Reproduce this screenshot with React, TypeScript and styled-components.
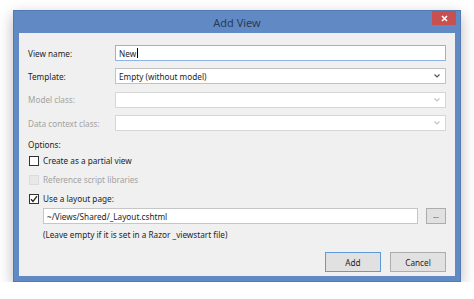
import React from "react";
import styled, { createGlobalStyle } from "styled-components";

const GlobalStyle = createGlobalStyle`
  html, body {
    margin: 0;
    padding: 0;
    background: #ffffff;
  }
  body {
    font-family: "Noto Sans", "Open Sans", sans-serif;
    font-size: 8.2px;
    color: #1e1e1e;
  }
`;

const Window = styled.div`
  margin: 10px 0 0 13px;
  width: 448px;
  box-sizing: border-box;
  background: #6189c4;
  border: 1px solid #5479b3;
  box-shadow: 0 5px 14px rgba(0, 0, 0, 0.28);
`;

const TitleBar = styled.div`
  position: relative;
  height: 22px;
  display: flex;
  align-items: center;
  justify-content: center;
`;

const Title = styled.div`
  font-size: 11px;
  color: #2a3b58;
  padding-top: 1px;
`;

const CloseButton = styled.div`
  position: absolute;
  top: 0;
  right: 4px;
  width: 24px;
  height: 14px;
  background: #c75050;
  color: #fff;
  display: flex;
  align-items: center;
  justify-content: center;
`;

const Body = styled.div`
  margin: 0 5px 5px 5px;
  background: #f0f0f0;
  padding: 12px 9px 4px 9px;
  display: flex;
  flex-direction: column;
`;

const FieldGrid = styled.div`
  display: grid;
  grid-template-columns: 87px 1fr;
  row-gap: 7.4px;
  align-items: center;
`;

const Label = styled.div<{ $disabled?: boolean }>`
  color: ${(p) => (p.$disabled ? "#a3a3a3" : "#1e1e1e")};
  white-space: nowrap;
`;

const TextBox = styled.div<{ $focused?: boolean }>`
  position: relative;
  height: 16px;
  box-sizing: border-box;
  background: #fff;
  border: 1px solid ${(p) => (p.$focused ? "#8fb4e4" : "#c6c6c6")};
  padding: 0 3px;
  display: flex;
  align-items: center;
  color: #1e1e1e;
`;

const Caret = styled.span`
  display: inline-block;
  width: 1px;
  height: 10px;
  background: #000;
  margin-left: 0.5px;
`;

const Select = styled.div<{ $disabled?: boolean }>`
  height: 16px;
  box-sizing: border-box;
  background: #fff;
  border: 1px solid ${(p) => (p.$disabled ? "#d6d6d6" : "#c2c2c2")};
  padding: 0 5px 0 3px;
  display: flex;
  align-items: center;
  justify-content: space-between;
  color: #1e1e1e;
`;

const SectionLabel = styled.div`
  margin-top: 8px;
  line-height: 12px;
`;

const CheckRow = styled.div`
  height: 19px;
  display: flex;
  align-items: center;
  gap: 4px;
  padding-left: 1px;
`;

const Box = styled.div<{ $disabled?: boolean }>`
  width: 10px;
  height: 10px;
  box-sizing: border-box;
  background: ${(p) => (p.$disabled ? "#e8e8e8" : "#fff")};
  border: 1px solid ${(p) => (p.$disabled ? "#dcdcdc" : "#333")};
  display: flex;
  align-items: center;
  justify-content: center;
`;

const PathRow = styled.div`
  display: flex;
  align-items: center;
  gap: 8px;
  padding-left: 15px;
`;

const PathBox = styled(TextBox)`
  flex: 1;
`;

const BrowseButton = styled.div`
  width: 20px;
  height: 16px;
  box-sizing: border-box;
  background: #e1e1e1;
  border: 1px solid #adadad;
  display: flex;
  align-items: center;
  justify-content: center;
  font-size: 7px;
  color: #333;
  padding-bottom: 2px;
`;

const Hint = styled.div`
  margin-top: 5px;
  padding-left: 15px;
  line-height: 12px;
`;

const ButtonRow = styled.div`
  margin-top: 11px;
  display: flex;
  justify-content: flex-end;
  gap: 9px;
`;

const Button = styled.div<{ $default?: boolean }>`
  width: 56px;
  height: 20px;
  box-sizing: border-box;
  background: #e1e1e1;
  border: 1px solid ${(p) => (p.$default ? "#5f9ad8" : "#adadad")};
  display: flex;
  align-items: center;
  justify-content: center;
  color: #1e1e1e;
`;

const Chevron = ({ disabled }: { disabled?: boolean }) => (
  <svg width="6" height="4" viewBox="0 0 6 4">
    <path
      d="M0.5 0.5 L3 3 L5.5 0.5"
      fill="none"
      stroke={disabled ? "#c4c4c4" : "#555"}
      strokeWidth="1.2"
    />
  </svg>
);

const Check = () => (
  <svg width="8" height="8" viewBox="0 0 8 8">
    <path d="M1 4.2 L3 6.4 L7 1.2" fill="none" stroke="#222" strokeWidth="1.3" />
  </svg>
);

const App = () => {
  return (
    <>
      <GlobalStyle />
      <Window>
        <TitleBar>
          <Title>Add View</Title>
          <CloseButton>
            <svg width="7" height="7" viewBox="0 0 7 7">
              <path d="M1 1 L6 6 M6 1 L1 6" stroke="#fff" strokeWidth="1.6" />
            </svg>
          </CloseButton>
        </TitleBar>

        <Body>
          <FieldGrid>
            <Label>View name:</Label>
            <TextBox $focused>
              New
              <Caret />
            </TextBox>

            <Label>Template:</Label>
            <Select>
              <span>Empty (without model)</span>
              <Chevron />
            </Select>

            <Label $disabled>Model class:</Label>
            <Select $disabled>
              <span />
              <Chevron disabled />
            </Select>

            <Label $disabled>Data context class:</Label>
            <Select $disabled>
              <span />
              <Chevron disabled />
            </Select>
          </FieldGrid>

          <SectionLabel>Options:</SectionLabel>

          <CheckRow>
            <Box />
            <Label>Create as a partial view</Label>
          </CheckRow>
          <CheckRow>
            <Box $disabled />
            <Label $disabled>Reference script libraries</Label>
          </CheckRow>
          <CheckRow>
            <Box>
              <Check />
            </Box>
            <Label>Use a layout page:</Label>
          </CheckRow>

          <PathRow>
            <PathBox>~/Views/Shared/_Layout.cshtml</PathBox>
            <BrowseButton>...</BrowseButton>
          </PathRow>

          <Hint>(Leave empty if it is set in a Razor _viewstart file)</Hint>

          <ButtonRow>
            <Button $default>Add</Button>
            <Button>Cancel</Button>
          </ButtonRow>
        </Body>
      </Window>
    </>
  );
};

export default App;
